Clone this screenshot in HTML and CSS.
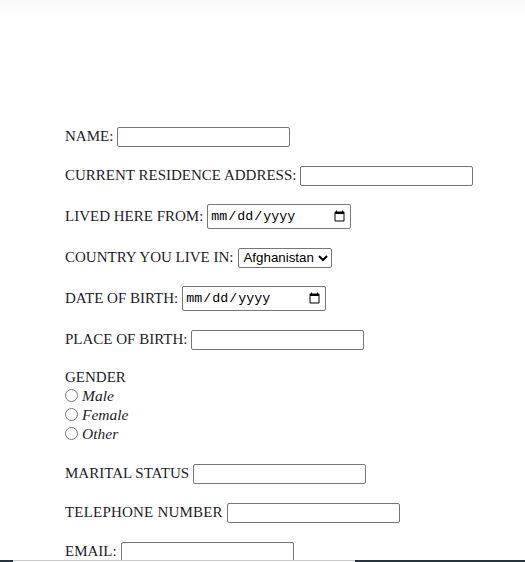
FILE: index.html
```html
<!DOCTYPE html>
<html>
<head>
<meta charset="utf-8">
<link rel="stylesheet" href="styles.css">
</head>
<body>
<div class="topshade"></div>
<form class="form">
  <div class="row"><label>NAME:</label><input type="text" class="txt"></div>
  <div class="row"><label>CURRENT RESIDENCE ADDRESS:</label><input type="text" class="txt"></div>
  <div class="row"><label>LIVED HERE FROM:</label><input type="date" class="date"></div>
  <div class="row"><label>COUNTRY YOU LIVE IN:</label><select class="sel"><option>Afghanistan</option></select></div>
  <div class="row"><label>DATE OF BIRTH:</label><input type="date" class="date"></div>
  <div class="row"><label>PLACE OF BIRTH:</label><input type="text" class="txt"></div>
  <div class="gender">
    <div class="gtitle">GENDER</div>
    <div class="radio"><input type="radio" name="g"><span>Male</span></div>
    <div class="radio"><input type="radio" name="g"><span>Female</span></div>
    <div class="radio"><input type="radio" name="g"><span>Other</span></div>
  </div>
  <div class="row"><label>MARITAL STATUS</label><input type="text" class="txt"></div>
  <div class="row"><label class="wide">TELEPHONE NUMBER</label><input type="text" class="txt"></div>
  <div class="row"><label>EMAIL:</label><input type="email" class="txt"></div>
</form>
<div class="bottombar"><div class="bb-dark bb-left"></div><div class="bb-mid"></div><div class="bb-dark bb-right"></div></div>
</body>
</html>
```
FILE: styles.css
```css
html, body {
  margin: 0;
  padding: 0;
  background: #fff;
}
body {
  font-family: "Liberation Serif", "Times New Roman", serif;
  font-size: 15px;
  color: #1c1c2a;
}
.topshade {
  height: 16px;
  background: linear-gradient(#f7f7f7, #ffffff);
}
.form {
  display: flex;
  flex-direction: column;
  gap: 18px;
  padding: 110px 0 0 65px;
}
.row {
  display: flex;
  align-items: center;
  gap: 4px;
  min-height: 21px;
}
.wide {
  letter-spacing: 0.2px;
}
.txt {
  width: 173px;
  height: 20px;
  box-sizing: border-box;
  margin: 0;
  padding: 1px 2px;
  border: 1px solid #767676;
  border-radius: 2px;
  font-family: "Liberation Sans", Arial, sans-serif;
  font-size: 13.33px;
}
.date {
  width: 144px;
  height: 25px;
  box-sizing: border-box;
  margin: 0;
  padding: 1px 2px;
  border: 1px solid #767676;
  border-radius: 2px;
  font-family: "Liberation Mono", monospace;
  font-size: 13.33px;
  color: #000;
}
.sel {
  width: 94px;
  height: 20px;
  margin: 0 0 0 1px;
  font-family: "Liberation Sans", Arial, sans-serif;
  font-size: 13.33px;
  border: 1px solid #767676;
  border-radius: 2px;
  background: #fff;
  color: #000;
}
.gender {
  display: flex;
  flex-direction: column;
  padding-bottom: 2px;
}
.gtitle {
  line-height: 18px;
}
.radio {
  display: flex;
  align-items: center;
  height: 19px;
}
.radio input {
  width: 13px;
  height: 13px;
  margin: 0 4px 0 0;
}
.radio span {
  font-style: italic;
  font-size: 15.5px;
}
.bottombar {
  position: fixed;
  left: 0;
  right: 0;
  bottom: 0;
  height: 2px;
  display: flex;
}
.bb-dark {
  background: #26353c;
}
.bb-left {
  width: 13px;
}
.bb-mid {
  width: 342px;
  border-top: 1px solid #c8c8c8;
  box-sizing: border-box;
  background: #fff;
}
.bb-right {
  flex: 1;
}
```
